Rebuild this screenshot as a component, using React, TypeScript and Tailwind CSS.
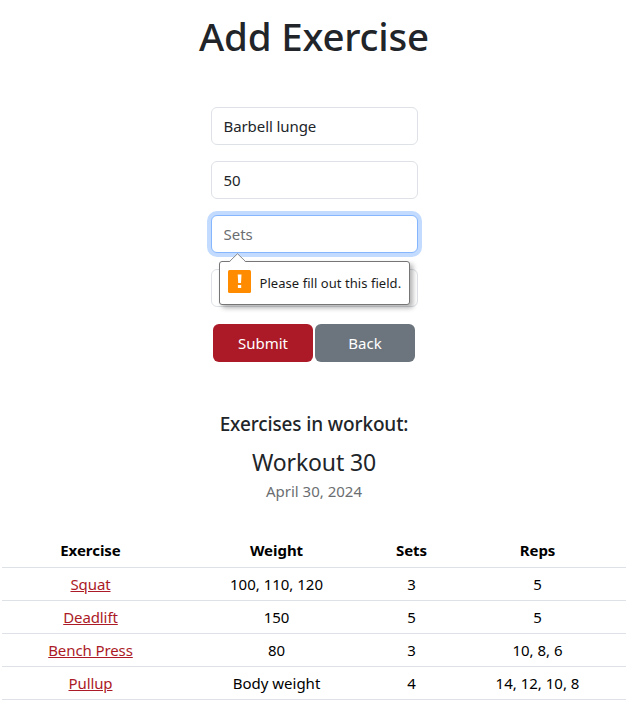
import React from "react";

const rows = [
  ["Squat", "100, 110, 120", "3", "5"],
  ["Deadlift", "150", "5", "5"],
  ["Bench Press", "80", "3", "10, 8, 6"],
  ["Pullup", "Body weight", "4", "14, 12, 10, 8"],
];

const field =
  "block h-[38px] w-full rounded-md border border-[#dee2e6] bg-white px-3 text-[15px] tracking-[-0.08px] text-[#212529] outline-none placeholder:text-[#6b6e71]";

function ValidationTip() {
  return (
    <div className="absolute left-2 top-[46px] z-10 flex h-11 w-[191px] items-center rounded-[3px] border border-[#767676] bg-white pl-2 shadow-[3px_3px_5px_rgba(0,0,0,0.3)]">
      <svg className="absolute -top-[9px] left-[9px]" width="18" height="10" viewBox="0 0 18 10">
        <path d="M0.5 9 L8.5 1 L16.5 9 V10 H0.5 Z" fill="#fff" />
        <path d="M0.5 8.5 L8.5 0.7 L16.5 8.5" fill="none" stroke="#8a8a8a" />
      </svg>
      <svg className="-mt-[3px] shrink-0" width="23" height="23" viewBox="0 0 23 23">
        <rect width="23" height="23" rx="1.5" fill="#ff8c00" />
        <path d="M9.7 4.5h3.8l-.5 8.5h-2.8z M9.9 15h3.3v3H9.9z" fill="#fff" />
      </svg>
      <span className="ml-[9px] whitespace-nowrap text-[13px] tracking-[0.05px] text-[#1b1b1b]">
        Please fill out this field.
      </span>
    </div>
  );
}

export default function App() {
  return (
    <main className="flex h-[715px] w-[633px] flex-col bg-white pl-[2px] pr-[7px] pt-[13px] font-['Noto_Sans','Open_Sans',sans-serif] text-[15px] leading-6 text-[#212529]">
      <h1 className="-mt-px mb-px text-center text-[38.5px] font-medium leading-[48px] tracking-[-0.2px]">Add Exercise</h1>
      <form className="mt-[46px] flex w-[207px] flex-col gap-4 self-center" onSubmit={(e) => e.preventDefault()}>
        <input className={field} defaultValue="Barbell lunge" />
        <input className={field} defaultValue="50" />
        <div className="relative">
          <input
            className="block h-[38px] w-full rounded-md border border-[#86b7fe] bg-white px-3 text-[15px] shadow-[0_0_0_4px_#c2dbff] outline-none placeholder:text-[#6b6e71]"
            placeholder="Sets"
          />
          <ValidationTip />
        </div>
        <input className={field} />
        <div className="mt-[1px] flex gap-[2px] pl-[2px] text-white">
          <button className="h-[38px] w-[100px] rounded-md bg-[#ab1a26] pl-px">Submit</button>
          <button className="h-[38px] w-[100px] rounded-md bg-[#6c757d] pl-px">Back</button>
        </div>
      </form>
      <section className="mt-[50px] flex flex-col items-center">
        <h2 className="text-[19px] font-medium leading-6 tracking-[-0.13px]">Exercises in workout:</h2>
        <h3 className="mt-3 text-[23px] leading-[29px] tracking-[-0.15px]">Workout 30</h3>
        <p className="mt-[2px] text-[#6b6e71]">April 30, 2024</p>
      </section>
      <table className="mt-[31px] w-[624px] table-fixed border-collapse text-center text-black">
        <colgroup>
          <col className="w-[177px]" />
          <col className="w-[195px]" />
          <col className="w-[75px]" />
          <col className="w-[177px]" />
        </colgroup>
        <thead>
          <tr className="h-[33px] border-b border-[#dee2e6] font-bold tracking-[-0.05px]">
            <th>Exercise</th>
            <th>Weight</th>
            <th>Sets</th>
            <th>Reps</th>
          </tr>
        </thead>
        <tbody>
          {rows.map(([name, weight, sets, reps]) => (
            <tr key={name} className="h-[33px] border-b border-[#dee2e6]">
              <td>
                <a href="#" className="tracking-[-0.1px] text-[#ab1a26] underline">{name}</a>
              </td>
              <td>{weight}</td>
              <td>{sets}</td>
              <td>{reps}</td>
            </tr>
          ))}
        </tbody>
      </table>
    </main>
  );
}
